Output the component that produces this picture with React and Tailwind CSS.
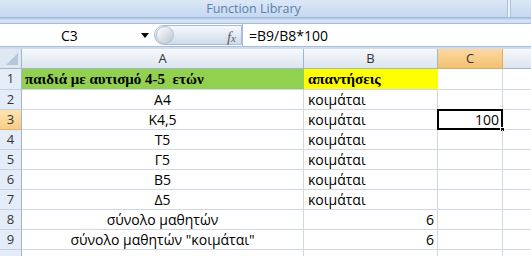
import React from "react";

const rows = [
  { n: 1, a: "παιδιά με αυτισμό 4-5  ετών", b: "απαντήσεις", head: true },
  { n: 2, a: "Α4", b: "κοιμάται" },
  { n: 3, a: "Κ4,5", b: "κοιμάται", c: "100" },
  { n: 4, a: "Τ5", b: "κοιμάται" },
  { n: 5, a: "Γ5", b: "κοιμάται" },
  { n: 6, a: "Β5", b: "κοιμάται" },
  { n: 7, a: "Δ5", b: "κοιμάται" },
  { n: 8, a: "σύνολο μαθητών", bNum: "6" },
  { n: 9, a: "σύνολο μαθητών \"κοιμάται\"", bNum: "6" },
  { n: 10, a: "", b: "", noLabel: true },
];

function Row({ r }) {
  const h = r.n === 1 ? "h-[21px]" : "h-[20px]";
  const sel = r.n === 3;
  return (
    <div className={`flex ${h} shrink-0`}>
      <div
        className={`w-[22px] shrink-0 flex items-center justify-center border-r border-b text-[13px] text-[#333] ${
          sel
            ? "bg-gradient-to-b from-[#fde3b5] to-[#f8cd83] border-r-[#9eb6ce] border-b-[#e3b36a]"
            : "bg-[#e4ecf7] border-r-[#9eb6ce] border-b-[#c5d1e0]"
        }`}
      >
        {r.noLabel ? "" : r.n}
      </div>
      <div
        className={`w-[282px] shrink-0 flex items-center border-r border-b border-[#d0d7e5] ${
          r.head ? "bg-[#92d050] border-r-[#92d050] pl-[3px]" : "justify-center"
        }`}
      >
        {r.head ? (
          <span className="font-['Liberation_Serif',serif] font-bold text-[15px] text-black whitespace-pre">
            {r.a}
          </span>
        ) : (
          <span className="text-[14px] text-black whitespace-pre">{r.a}</span>
        )}
      </div>
      <div
        className={`w-[134px] shrink-0 flex items-center border-r border-b border-[#d0d7e5] ${
          r.head ? "bg-[#ffff00] border-r-[#ffff00] pl-[4px]" : r.bNum ? "justify-end pr-[3px]" : "pl-[4px]"
        }`}
      >
        {r.head ? (
          <span className="font-['Liberation_Serif',serif] font-bold text-[15px] text-black">{r.b}</span>
        ) : (
          <span className="text-[14px] text-black">{r.bNum || r.b}</span>
        )}
      </div>
      <div className="w-[65px] shrink-0 relative flex items-center justify-end pr-[3px] border-r border-b border-[#d0d7e5]">
        {sel && (
          <>
            <div className="absolute left-[-1px] top-[-1px] right-[-1px] bottom-[-1px] border-2 border-black" />
            <div className="absolute right-[-3px] bottom-[-3px] w-[5px] h-[5px] bg-black border border-white" />
          </>
        )}
        <span className="text-[14px] text-black relative">{r.c || ""}</span>
      </div>
      <div className="flex-1 border-b border-[#d0d7e5]" />
    </div>
  );
}

export default function App() {
  return (
    <div className="w-[531px] h-[256px] overflow-hidden bg-white font-['Open_Sans','Noto_Sans',sans-serif] flex flex-col">
      {/* Ribbon group label */}
      <div className="h-[17px] shrink-0 flex bg-gradient-to-b from-[#dbe7f6] to-[#c6d9f1]">
        <div className="w-[508px] flex items-end justify-center pb-[0px] text-[12.5px] leading-[16px] text-[#5a7eaa] border-r border-[#a9c1de]">
          Function Library
        </div>
        <div className="w-[2px] bg-[#eef4fb]" />
        <div className="flex-1 border-l border-[#a9c1de]" />
      </div>
      <div className="h-[6px] shrink-0 bg-gradient-to-b from-[#aec6e3] via-[#d6e4f5] to-[#cadcf1] border-t border-[#9fbadb]" />
      {/* Formula bar */}
      <div className="h-[24px] shrink-0 flex bg-white border-t border-b border-[#a6bed9]">
        <div className="w-[154px] shrink-0 flex items-center relative">
          <span className="absolute left-[61px] text-[14px] text-black">C3</span>
          <span className="absolute left-[141px] top-[9px] w-0 h-0 border-l-[4px] border-r-[4px] border-t-[5px] border-l-transparent border-r-transparent border-t-black" />
        </div>
        <div className="w-[88px] shrink-0 my-[1px] rounded-l-full bg-gradient-to-b from-[#f7f9fc] via-[#e3eaf4] to-[#cfdbea] border border-[#a9bcd5] flex items-center relative">
          <div className="ml-[1px] w-[18px] h-[18px] rounded-full bg-gradient-to-br from-[#ffffff] via-[#dfe4ea] to-[#b9c2cd] border border-[#b6c3d3]" />
          <span className="absolute right-[5px] top-[0px] font-['Liberation_Serif',serif] italic text-[15px] text-[#5f5f5f]">
            f<span className="text-[11px]">x</span>
          </span>
        </div>
        <div className="flex-1 flex items-center pl-[6px] text-[14px] text-black border-l border-[#a6bed9]">=B9/B8*100</div>
      </div>
      <div className="h-[2px] shrink-0 bg-[#cfddee]" />
      {/* Column headers */}
      <div className="h-[20px] shrink-0 flex text-[13px] text-[#333]">
        <div className="w-[22px] shrink-0 bg-[#dfe7f1] border-r border-b border-[#9eb6ce] relative">
          <svg className="absolute right-[3px] bottom-[3px]" width="12" height="12" viewBox="0 0 12 12">
            <polygon points="12,0 12,12 0,12" fill="#b4c6dc" />
          </svg>
        </div>
        <div className="w-[282px] shrink-0 flex items-center justify-center bg-gradient-to-b from-[#f6f8fb] to-[#dde5ef] border-r border-b border-[#9eb6ce]">A</div>
        <div className="w-[134px] shrink-0 flex items-center justify-center bg-gradient-to-b from-[#f6f8fb] to-[#dde5ef] border-r border-b border-[#9eb6ce]">B</div>
        <div className="w-[65px] shrink-0 flex items-center justify-center bg-gradient-to-b from-[#fbd9a2] to-[#f4c071] border-r border-b border-[#e0ab5c]">C</div>
        <div className="flex-1 bg-gradient-to-b from-[#f6f8fb] to-[#dde5ef] border-b border-[#9eb6ce]" />
      </div>
      {rows.map((r) => (
        <Row key={r.n} r={r} />
      ))}
    </div>
  );
}
